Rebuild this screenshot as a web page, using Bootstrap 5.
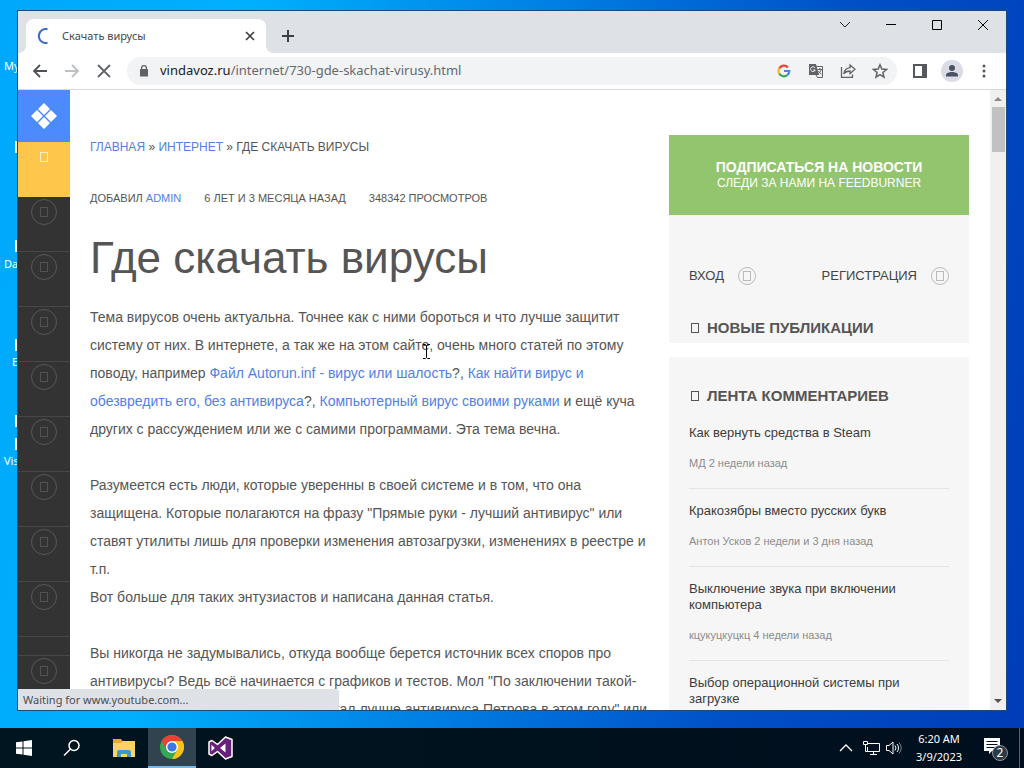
<!DOCTYPE html>
<html lang="ru">
  <head>
    <meta charset="utf-8" />
    <meta name="viewport" content="width=device-width, initial-scale=1" />
    <title>Скачать вирусы</title>
    <link href="https://cdn.jsdelivr.net/npm/bootstrap@5.3.0/dist/css/bootstrap.min.css" rel="stylesheet" />
    <style>
      body {
        font-family: "Liberation Sans", Arial, sans-serif;
        font-size: 14px;
        color: #555;
      }
      a {
        color: #5180e6;
        text-decoration: none;
      }
      svg {
        display: block;
        flex-shrink: 0;
      }
      button {
        border: 0;
        padding: 0;
        background: none;
        color: inherit;
      }
      .ui-font {
        font-family: "Noto Sans", "Open Sans", sans-serif;
      }

      /* desktop */
      .desktop {
        min-height: 0;
        padding: 10px 17px 17px;
        background: linear-gradient(100deg, #00a8fb 0%, #00b0fd 22%, #0078e0 52%, #0050c8 74%, #003db8 100%);
      }
      .shortcut {
        position: absolute;
        left: 0;
        width: 60px;
        color: #fff;
        font-size: 11px;
        line-height: 16px;
        white-space: nowrap;
      }
      .shortcut-pic {
        position: absolute;
        left: 15px;
        width: 20px;
        height: 12px;
        background: #f4f8fb;
      }

      /* browser window */
      .browser {
        border: 1px solid #1d4a7c;
        background: #fff;
      }
      .tabstrip {
        height: 42px;
        background: #dee1e6;
      }
      .tab {
        width: 240px;
        height: 34px;
        margin: 8px 0 0 8px;
        padding: 0 8px 0 10px;
        background: #fff;
        border-radius: 8px 8px 0 0;
        font-size: 11px;
        color: #45494d;
      }
      .tab::before,
      .tab::after {
        content: "";
        position: absolute;
        bottom: 0;
        width: 8px;
        height: 8px;
      }
      .tab::before {
        left: -8px;
        background: radial-gradient(circle at 0 0, transparent 8px, #fff 8px);
      }
      .tab::after {
        right: -8px;
        background: radial-gradient(circle at 100% 0, transparent 8px, #fff 8px);
      }
      .win-btn {
        width: 46px;
        height: 28px;
      }
      .toolbar {
        height: 37px;
        padding: 0 6px;
        border-bottom: 1px solid #d9dadc;
        color: #5f6368;
      }
      .tool-btn {
        width: 32px;
        height: 28px;
      }
      .tool-btn svg,
      .win-btn svg,
      .task-btn svg {
        margin: auto;
      }
      .omnibox {
        height: 28px;
        margin: 0 7px;
        padding: 0 1px 0 9px;
        border-radius: 14px;
        background: #f1f3f4;
        font-size: 13px;
      }
      .omnibox label {
        color: #202124;
      }
      .omnibox input {
        min-width: 0;
        border: 0;
        padding: 0;
        outline: 0;
        background: none;
        color: #65696e;
      }
      .avatar {
        width: 22px;
        height: 22px;
        background: #dadde6;
      }

      /* site */
      .viewport {
        min-height: 0;
      }
      .rail {
        width: 52px;
        background: #333;
      }
      .rail-logo {
        height: 52px;
        background: #4c8bfb;
      }
      .rail-hot {
        height: 55px;
        padding-top: 10px;
        background: #ffc64c;
        color: #fff0c8;
      }
      .rail-item {
        height: 55px;
        padding-top: 2px;
        border-bottom: 1px solid #474747;
        color: #525252;
      }
      .rail-gap {
        height: 19px;
        border-bottom: 1px solid #474747;
      }
      .ring {
        width: 26px;
        height: 26px;
        border: 1px solid #585858;
      }
      .ring-sm {
        width: 18px;
        height: 18px;
        border: 1px solid #bbb;
        color: #bbb;
      }
      .tofu {
        display: block;
        width: 8px;
        height: 10px;
        border: 1px solid currentColor;
      }
      .site {
        padding: 45px 21px 0 20px;
        gap: 19px;
      }
      .crumbs {
        font-size: 12px;
        line-height: 24px;
      }
      .meta {
        margin-top: 28px;
        gap: 23px;
        font-size: 11px;
        line-height: 22px;
      }
      .title {
        margin: 24px 0 20px;
        font-size: 44px;
        line-height: 50px;
        font-weight: 400;
      }
      .story p {
        margin-bottom: 28px;
        line-height: 28px;
      }
      .side {
        width: 300px;
      }
      .feed {
        height: 80px;
        background: #92c56e;
        color: #fff;
        font-size: 12px;
        line-height: 16px;
      }
      .feed strong {
        font-size: 14px;
      }
      .box {
        padding: 0 20px;
        background: #f6f6f6;
      }
      .login {
        padding: 51px 0 31px;
        line-height: 20px;
      }
      .login a {
        gap: 14px;
        font-size: 13px;
        color: #444;
      }
      .box h2 {
        gap: 8px;
        margin: 0;
        padding: 0 2px;
        font-size: 15px;
        line-height: 22px;
        font-weight: 700;
      }
      .box-new {
        margin-bottom: 14px;
        padding-bottom: 4px;
      }
      .box-talk {
        padding-top: 28px;
      }
      .note {
        padding: 14px 0 17px;
        line-height: 16px;
        border-bottom: 1px solid #e4e4e4;
      }
      .note a {
        display: block;
        margin-bottom: 14px;
        font-size: 13px;
        color: #3c3c3c;
      }
      .note span {
        display: block;
        font-size: 11px;
        color: #8c8c8c;
      }
      .scroll {
        width: 16px;
        background: #f1f0ef;
      }
      .scroll svg {
        margin: 6px auto;
      }
      .thumb {
        width: 13px;
        height: 45px;
        background: #c1c1c1;
      }
      .status {
        position: absolute;
        left: 0;
        bottom: 0;
        width: 321px;
        height: 21px;
        padding-left: 5px;
        border-top-right-radius: 4px;
        background: #dee1e6;
        color: #4a4d51;
        font-size: 11px;
        line-height: 22px;
      }
      .pointer {
        position: absolute;
        left: 422px;
        top: 344px;
      }

      /* taskbar */
      .taskbar {
        height: 40px;
        background: linear-gradient(90deg, #00151f, #000f1e);
        color: #fff;
      }
      .task-btn {
        width: 48px;
        height: 40px;
      }
      .task-btn.running {
        background: #30434e;
        border-bottom: 2px solid #76b9ed;
      }
      .tray {
        gap: 6px;
        padding-right: 4px;
      }
      .clock {
        width: 52px;
        font-size: 11px;
        line-height: 18px;
      }
      .peek {
        width: 1px;
        height: 40px;
        background: #53616c;
      }
    </style>
  </head>
  <body class="vh-100 d-flex flex-column overflow-hidden">
    <div class="desktop position-relative flex-grow-1 d-flex">
      <div class="ui-font">
        <span class="shortcut ps-1" style="top: 58px">My PC</span>
        <span class="shortcut-pic" style="top: 141px"></span>
        <span class="shortcut-pic" style="top: 240px"></span>
        <span class="shortcut ps-1" style="top: 256px">Data</span>
        <span class="shortcut-pic" style="top: 339px"></span>
        <span class="shortcut ps-2 ms-1" style="top: 354px">Excel</span>
        <span class="shortcut-pic" style="top: 415px"></span>
        <span class="shortcut-pic" style="top: 438px"></span>
        <span class="shortcut ps-1" style="top: 453px">Visual</span>
      </div>

      <div class="browser position-relative flex-grow-1 d-flex flex-column overflow-hidden">
        <div class="tabstrip ui-font d-flex flex-shrink-0">
          <div class="tab position-relative d-flex align-items-center">
            <svg width="14" height="16" viewBox="0 0 14 16" fill="none" stroke="#3f6bc4" stroke-width="2"><path d="M11.500 1.200A7 7 0 1 0 11.500 14.800" /></svg>
            <span class="ms-2 ps-1 flex-grow-1">Скачать вирусы</span>
            <button type="button" aria-label="Закрыть вкладку"><svg width="16" height="16" viewBox="0 0 16 16" stroke="#3c4043" stroke-width="1.7"><path d="M4 4l8 8M12 4l-8 8" /></svg></button>
          </div>
          <button type="button" class="ms-3 mt-2" aria-label="Новая вкладка"><svg width="14" height="14" viewBox="0 0 14 14" stroke="#3c4043" stroke-width="2"><path d="M6 1v12M0 7h12" /></svg></button>
          <div class="ms-auto d-flex">
            <button type="button" class="win-btn" aria-label="Поиск вкладок"><svg width="12" height="8" viewBox="0 0 12 8" fill="none" stroke="#222"><path d="M1 1l5 5 5-5" /></svg></button>
            <button type="button" class="win-btn" aria-label="Свернуть"><svg width="10" height="2" viewBox="0 0 10 2"><path d="M0 0h10v1H0z" /></svg></button>
            <button type="button" class="win-btn" aria-label="Развернуть"><svg width="10" height="10" viewBox="0 0 10 10" fill="none" stroke="#000"><path d="M.5.5h9v9h-9z" /></svg></button>
            <button type="button" class="win-btn" aria-label="Закрыть"><svg width="12" height="12" viewBox="0 0 12 12" stroke="#000"><path d="M1 1l10 10M11 1L1 11" /></svg></button>
          </div>
        </div>

        <div class="toolbar ui-font d-flex flex-shrink-0 align-items-center">
          <button type="button" class="tool-btn" aria-label="Назад"><svg width="16" height="16" viewBox="0 0 16 16" fill="none" stroke="#4d5155" stroke-width="1.8"><path d="M15 8H2M8 2L2 8l6 6" /></svg></button>
          <button type="button" class="tool-btn" aria-label="Вперёд"><svg width="16" height="16" viewBox="0 0 16 16" fill="none" stroke="#bdc0c3" stroke-width="1.8"><path d="M1 8h13M8 2l6 6-6 6" /></svg></button>
          <button type="button" class="tool-btn" aria-label="Остановить"><svg width="14" height="14" viewBox="0 0 14 14" stroke="#5f6368" stroke-width="1.8"><path d="M1 1l12 12M13 1L1 13" /></svg></button>
          <div class="omnibox flex-grow-1 d-flex align-items-center">
            <svg class="me-2" width="16" height="14" viewBox="0 0 16 14"><path fill="#5f6368" d="M4 5h1V4a3 3 0 0 1 6 0v1h1v7.500H4z" /><path fill="#f1f3f4" d="M6.300 5h3.400V4a1.700 1.700 0 0 0-3.400 0z" /></svg>
            <label for="address">vindavoz.ru</label>
            <input id="address" class="flex-grow-1" type="text" value="/internet/730-gde-skachat-virusy.html" />
            <button type="button" class="tool-btn" aria-label="Google">
              <svg width="14" height="14" viewBox="0 0 14 14" fill="none" stroke-width="2.200">
                <path stroke="#ea4335" d="M2.200 4.500A5.300 5.300 0 0 1 10.900 3.400" />
                <path stroke="#fbbc05" d="M2.200 4.500A5.300 5.300 0 0 0 2.200 9.500" />
                <path stroke="#34a853" d="M2.200 9.500A5.300 5.300 0 0 0 10.400 11" />
                <path stroke="#4285f4" d="M10.400 11A5.300 5.300 0 0 0 12.300 7H7" />
              </svg>
            </button>
            <button type="button" class="tool-btn" aria-label="Перевести">
              <svg width="16" height="16" viewBox="0 0 16 16" fill="none">
                <path fill="#5f6368" d="M1 1h7l3 11H1z" />
                <path stroke="#f1f3f4" d="M7 4.800A2.400 2.400 0 1 0 7.300 7H5.200" />
                <path stroke="#5f6368" d="M8.500 3.500h6v11H9.500l-1.500-2.500M9.500 6.500h4.500M11.800 5v1.500M13 7c-.5 2-1.500 3-2.800 4M10.500 8c.6 1.300 1.500 2.300 3 3.200" />
              </svg>
            </button>
            <button type="button" class="tool-btn" aria-label="Поделиться"><svg width="16" height="16" viewBox="0 0 16 16" fill="none" stroke="#5f6368" stroke-width="1.300"><path d="M1.500 4v10.300h11V11.500M10 2l5 4.300-5 4.200V8C7 8 5 9 3.800 10.800 4.300 7.500 6.500 5 10 4.600z" /></svg></button>
            <button type="button" class="tool-btn" aria-label="В закладки"><svg width="16" height="16" viewBox="0 0 16 16" fill="none" stroke="#5f6368" stroke-width="1.500"><path d="M8 1.800l1.800 4.300 4.700.4-3.600 3 1.100 4.600L8 11.700l-4 2.400 1.100-4.600-3.600-3 4.700-.4z" /></svg></button>
          </div>
          <button type="button" class="tool-btn" aria-label="Боковая панель"><svg width="14" height="14" viewBox="0 0 14 14"><path fill="#54585c" fill-rule="evenodd" d="M0 0h14v14H0zM2 2v10h7V2z" /></svg></button>
          <button type="button" class="tool-btn" aria-label="Профиль"><span class="avatar rounded-circle d-flex mx-auto"><svg width="14" height="14" viewBox="0 0 14 14" fill="#4a5160"><circle cx="7" cy="4" r="3" /><path d="M1 12.500V11c0-2 3-3 6-3s6 1 6 3v1.500z" /></svg></span></button>
          <button type="button" class="tool-btn" aria-label="Меню"><svg width="4" height="14" viewBox="0 0 4 14" fill="#54585c"><circle cx="2" cy="2" r="1.500" /><circle cx="2" cy="7" r="1.500" /><circle cx="2" cy="12" r="1.500" /></svg></button>
        </div>

        <div class="viewport flex-grow-1 d-flex overflow-hidden">
          <nav class="rail flex-shrink-0" aria-label="Разделы">
            <a href="#" class="rail-logo d-flex align-items-center justify-content-center" aria-label="Главная">
              <svg width="26" height="26" viewBox="0 0 26 26" fill="#fff"><path d="M13 0l6 6-6 6-6-6zM6 7l6 6-6 6-6-6zM20 7l6 6-6 6-6-6zM13 14l6 6-6 6-6-6z" /></svg>
            </a>
            <a href="#" class="rail-hot d-flex justify-content-center" aria-label="Популярное"><span class="tofu"></span></a>
            <a href="#" class="rail-item d-flex justify-content-center" aria-label="Windows"><span class="ring rounded-circle d-flex align-items-center justify-content-center"><span class="tofu"></span></span></a>
            <a href="#" class="rail-item d-flex justify-content-center" aria-label="Интернет"><span class="ring rounded-circle d-flex align-items-center justify-content-center"><span class="tofu"></span></span></a>
            <a href="#" class="rail-item d-flex justify-content-center" aria-label="Программы"><span class="ring rounded-circle d-flex align-items-center justify-content-center"><span class="tofu"></span></span></a>
            <a href="#" class="rail-item d-flex justify-content-center" aria-label="Железо"><span class="ring rounded-circle d-flex align-items-center justify-content-center"><span class="tofu"></span></span></a>
            <a href="#" class="rail-item d-flex justify-content-center" aria-label="Игры"><span class="ring rounded-circle d-flex align-items-center justify-content-center"><span class="tofu"></span></span></a>
            <a href="#" class="rail-item d-flex justify-content-center" aria-label="Видео"><span class="ring rounded-circle d-flex align-items-center justify-content-center"><span class="tofu"></span></span></a>
            <a href="#" class="rail-item d-flex justify-content-center" aria-label="Разное"><span class="ring rounded-circle d-flex align-items-center justify-content-center"><span class="tofu"></span></span></a>
            <a href="#" class="rail-item d-flex justify-content-center" aria-label="Контакты"><span class="ring rounded-circle d-flex align-items-center justify-content-center"><span class="tofu"></span></span></a>
            <div class="rail-gap"></div>
            <a href="#" class="rail-item d-flex justify-content-center" aria-label="Поиск"><span class="ring rounded-circle d-flex align-items-center justify-content-center"><span class="tofu"></span></span></a>
          </nav>

          <div class="site flex-grow-1 d-flex">
            <main class="story flex-grow-1">
              <div class="crumbs"><a href="#">ГЛАВНАЯ</a> » <a href="#">ИНТЕРНЕТ</a> » ГДЕ СКАЧАТЬ ВИРУСЫ</div>
              <div class="meta d-flex">
                <span>ДОБАВИЛ <a href="#">ADMIN</a></span>
                <span>6 ЛЕТ И 3 МЕСЯЦА НАЗАД</span>
                <span>348342 ПРОСМОТРОВ</span>
              </div>
              <h1 class="title">Где скачать вирусы</h1>
              <p>Тема вирусов очень актуальна. Точнее как с ними бороться и что лучше защитит систему от них. В интернете, а так же на этом сайте, очень много статей по этому поводу, например <a href="#">Файл Autorun.inf - вирус или шалость</a>?, <a href="#">Как найти вирус и обезвредить его, без антивируса</a>?, <a href="#">Компьютерный вирус своими руками</a> и ещё куча других с рассуждением или же с самими программами. Эта тема вечна.</p>
              <p>Разумеется есть люди, которые уверенны в своей системе и в том, что она защищена. Которые полагаются на фразу "Прямые руки - лучший антивирус" или ставят утилиты лишь для проверки изменения автозагрузки, изменениях в реестре и т.п.<br />Вот больше для таких энтузиастов и написана данная статья.</p>
              <p>Вы никогда не задумывались, откуда вообще берется источник всех споров про антивирусы? Ведь всё начинается с графиков и тестов. Мол "По заключении такой-то лаборатории антивирус Иванова стал лучше антивируса Петрова в этом году" или</p>
            </main>

            <aside class="side flex-shrink-0 d-flex flex-column">
              <a href="#" class="feed flex-shrink-0 d-flex flex-column align-items-center justify-content-center">
                <strong>ПОДПИСАТЬСЯ НА НОВОСТИ</strong>
                <span>СЛЕДИ ЗА НАМИ НА FEEDBURNER</span>
              </a>
              <div class="box box-new">
                <div class="login d-flex justify-content-between">
                  <a href="#" class="d-flex align-items-center">ВХОД <span class="ring-sm rounded-circle d-flex align-items-center justify-content-center"><span class="tofu"></span></span></a>
                  <a href="#" class="d-flex align-items-center">РЕГИСТРАЦИЯ <span class="ring-sm rounded-circle d-flex align-items-center justify-content-center"><span class="tofu"></span></span></a>
                </div>
                <h2 class="d-flex align-items-center"><span class="tofu"></span>НОВЫЕ ПУБЛИКАЦИИ</h2>
              </div>
              <div class="box box-talk flex-grow-1">
                <h2 class="d-flex align-items-center mb-1"><span class="tofu"></span>ЛЕНТА КОММЕНТАРИЕВ</h2>
                <div class="note"><a href="#">Как вернуть средства в Steam</a><span>МД 2 недели назад</span></div>
                <div class="note"><a href="#">Кракозябры вместо русских букв</a><span>Антон Усков 2 недели и 3 дня назад</span></div>
                <div class="note"><a href="#">Выключение звука при включении компьютера</a><span>кцукуцкуцкц 4 недели назад</span></div>
                <div class="note"><a href="#">Выбор операционной системы при загрузке</a></div>
              </div>
            </aside>
          </div>

          <div class="scroll flex-shrink-0 d-flex flex-column align-items-center">
            <svg width="8" height="5" viewBox="0 0 8 5" fill="#8a8a8a"><path d="M0 5l4-4 4 4z" /></svg>
            <div class="thumb"></div>
            <svg class="mt-auto" width="8" height="5" viewBox="0 0 8 5" fill="#505050"><path d="M0 0l4 4 4-4z" /></svg>
          </div>
        </div>
        <div class="status ui-font">Waiting for www.youtube.com...</div>
      </div>
      <svg class="pointer" width="9" height="15" viewBox="0 0 9 15" fill="none" stroke="#000"><path d="M1 .5h2.500l1 1 1-1H8M4.500 1.500v12M1 14.500h2.500l1-1 1 1H8" /></svg>
    </div>

    <footer class="taskbar ui-font d-flex flex-shrink-0 align-items-center">
      <button type="button" class="task-btn" aria-label="Пуск"><svg width="16" height="16" viewBox="0 0 16 16" fill="#fff"><path d="M0 2.300l6.500-.9v6.100H0zM7.500 1.200L16 0v7.500H7.500zM0 8.500h6.500v6.100L0 13.700zM7.500 8.500H16V16l-8.500-1.200z" /></svg></button>
      <button type="button" class="task-btn" aria-label="Поиск"><svg width="18" height="18" viewBox="0 0 18 18" fill="none" stroke="#fff" stroke-width="1.500"><circle cx="11" cy="6.500" r="5" /><path d="M7.500 10L1 16.500" /></svg></button>
      <button type="button" class="task-btn ms-1" aria-label="Проводник">
        <svg width="22" height="18" viewBox="0 0 22 18">
          <path fill="#e8a92e" d="M0 0h8l1.500 2H21v5H0z" />
          <path fill="#fcd462" d="M0 4h8l1.500-2H22v16H0z" />
          <path fill="#3f97cc" d="M4 18v-5.500L5.500 11h11l1.500 1.500V18h-4v-3H8v3z" />
        </svg>
      </button>
      <button type="button" class="task-btn running" aria-label="Google Chrome">
        <svg width="24" height="24" viewBox="0 0 24 24">
          <circle cx="12" cy="12" r="12" fill="#34a853" />
          <path fill="#fbc116" d="M12 6h10.400A12 12 0 0 1 12 24l5.200-9z" />
          <path fill="#ea4335" d="M1.600 6L6.800 15 12 6h10.400A12 12 0 0 0 1.600 6z" />
          <circle cx="12" cy="12" r="6" fill="#fff" />
          <circle cx="12" cy="12" r="4.600" fill="#3c79e6" />
        </svg>
      </button>
      <button type="button" class="task-btn" aria-label="Visual Studio">
        <svg width="26" height="24" viewBox="0 0 26 24">
          <path fill="#68217a" stroke="#fff" stroke-width="1.500" stroke-linejoin="round" d="M18.500 1L25 3.500v17L18.500 23l-8-7.500L5 19.500l-3-1.500V6l3-1.500 5.500 4z" />
          <path fill="#fff" d="M18.500 7.500v9L13 12zM4.500 8.700v6.600L7.800 12z" />
        </svg>
      </button>

      <div class="tray ms-auto d-flex align-items-center">
        <svg width="14" height="8" viewBox="0 0 14 8" fill="none" stroke="#fff" stroke-width="1.300"><path d="M1 7l6-6 6 6" /></svg>
        <svg class="ms-1" width="17" height="14" viewBox="0 0 17 14" fill="none" stroke="#fff"><path d="M5 2.500h11.500v8H4.500V6M10.500 10.500v3M7 13.500h7M.5.500h4v3h-4zM2.500 3.500v7h2" /></svg>
        <svg width="17" height="14" viewBox="0 0 17 14" fill="none" stroke="#fff"><path d="M.5 4.500H3l4-3.500v12L3 9.500H.5z" /><path d="M9 4.500a4 4 0 0 1 0 5M11 3a6 6 0 0 1 0 8" /><path stroke="#7d8a93" d="M13 1.500a8 8 0 0 1 0 11" /></svg>
        <div class="clock ms-1 me-1 text-center"><div>6:20 AM</div><div>3/9/2023</div></div>
        <svg class="ms-2" width="26" height="26" viewBox="0 0 26 26">
          <path fill="#fff" d="M1 3h16v13H9l-3 3v-3H1z" />
          <path stroke="#00101e" d="M3.500 6.500h11M3.500 9.500h11M3.500 12.500h8" />
          <circle cx="17" cy="18" r="7.500" fill="#2c3942" stroke="#8b969d" />
          <text x="17" y="22" text-anchor="middle" font-size="12" fill="#fff">2</text>
        </svg>
        <div class="peek ms-1"></div>
      </div>
    </footer>
    <script src="https://cdn.jsdelivr.net/npm/bootstrap@5.3.0/dist/js/bootstrap.bundle.min.js"></script>
  </body>
</html>
